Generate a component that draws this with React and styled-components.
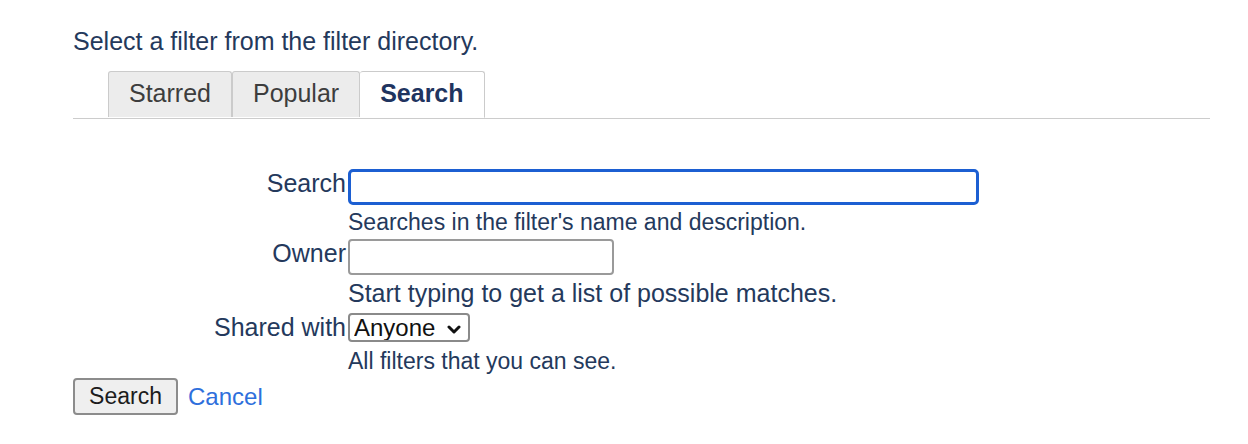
import React from "react";
import styled, { createGlobalStyle } from "styled-components";

const GlobalStyle = createGlobalStyle`
  body {
    margin: 0;
    background: #fff;
    font-family: "Liberation Sans", Arial, Helvetica, sans-serif;
  }
`;

const tabs = [
  { id: "starred", label: "Starred" },
  { id: "popular", label: "Popular" },
  { id: "search", label: "Search" },
];

const App = () => {
  const active = "search";
  return (
    <>
      <GlobalStyle />
      <Page>
        <Intro>Select a filter from the filter directory.</Intro>
        <TabBar>
          {tabs.map((tab) => (
            <Tab key={tab.id} $active={tab.id === active}>
              {tab.label}
            </Tab>
          ))}
        </TabBar>
        <Form>
          <Label htmlFor="filter-search">Search</Label>
          <TextInput id="filter-search" $focused $width={631} $height={36} />
          <Hint $spacing="4px 0 4px">
            Searches in the filter's name and description.
          </Hint>

          <Label htmlFor="filter-owner">Owner</Label>
          <TextInput id="filter-owner" $width={266} $height={36} />
          <Hint $large $spacing="4px 0 5px">
            Start typing to get a list of possible matches.
          </Hint>

          <Label htmlFor="filter-shared">Shared with</Label>
          <SelectBox>
            <Select id="filter-shared" defaultValue="anyone">
              <option value="anyone">Anyone</option>
            </Select>
            <Chevron viewBox="0 0 14 9" aria-hidden="true">
              <path
                d="M2 2 L7 7 L12 2"
                fill="none"
                stroke="#111"
                strokeWidth="3"
                strokeLinecap="round"
                strokeLinejoin="round"
              />
            </Chevron>
          </SelectBox>
          <Hint $spacing="6px 0 4px">All filters that you can see.</Hint>
        </Form>
        <Actions>
          <Button type="button">Search</Button>
          <CancelLink href="#">Cancel</CancelLink>
        </Actions>
      </Page>
    </>
  );
};

const Page = styled.div`
  width: 1137px;
  padding: 27px 0 0 73px;
  color: #24395c;
`;

const Intro = styled.div`
  font-size: 25px;
  line-height: 29px;
`;

const TabBar = styled.div`
  display: flex;
  margin-top: 15px;
  padding-left: 35px;
  border-bottom: 1px solid #cccccc;
  height: 47px;
`;

const Tab = styled.div`
  display: flex;
  align-items: center;
  padding: 0 20px 3px;
  font-size: 25px;
  border: 1px solid #cbcbcb;
  border-bottom: ${(p) => (p.$active ? "1px solid #fff" : "none")};
  border-left: ${(p) => (p.$active ? "none" : "1px solid #cbcbcb")};
  border-radius: 3px 3px 0 0;
  background: ${(p) => (p.$active ? "#fff" : "#ececec")};
  color: ${(p) => (p.$active ? "#1f3460" : "#3d3d3d")};
  font-weight: ${(p) => (p.$active ? "bold" : "normal")};
  height: ${(p) => (p.$active ? "47px" : "46px")};
  box-sizing: border-box;
  &:first-child {
    border-left: 1px solid #cbcbcb;
  }
`;

const Form = styled.div`
  display: grid;
  grid-template-columns: 275px 1fr;
  align-items: start;
  margin-top: 50px;
`;

const Label = styled.label`
  grid-column: 1;
  justify-self: end;
  padding-right: 2px;
  font-size: 25px;
  line-height: 29px;
`;

const TextInput = styled.input`
  grid-column: 2;
  box-sizing: border-box;
  width: ${(p) => p.$width}px;
  height: ${(p) => p.$height}px;
  border: ${(p) => (p.$focused ? "3px solid #1c5fd2" : "2px solid #9a9a9a")};
  border-radius: ${(p) => (p.$focused ? "5px" : "4px")};
  background: #fff;
  outline: none;
  font: inherit;
`;

const Hint = styled.div`
  grid-column: 2;
  font-size: ${(p) => (p.$large ? "25px" : "23px")};
  line-height: ${(p) => (p.$large ? "29px" : "26px")};
  margin: ${(p) => p.$spacing};
`;

const SelectBox = styled.div`
  grid-column: 2;
  position: relative;
  display: inline-flex;
  align-items: center;
  justify-self: start;
  box-sizing: border-box;
  width: 122px;
  height: 29px;
  border: 2px solid #8a8a8a;
  border-radius: 4px;
  background: #fff;
`;

const Select = styled.select`
  appearance: none;
  border: none;
  background: transparent;
  outline: none;
  padding: 0 0 0 4px;
  width: 100%;
  height: 100%;
  font-family: "Liberation Sans", Arial, sans-serif;
  font-size: 24px;
  line-height: 25px;
  color: #111;
`;

const Chevron = styled.svg`
  position: absolute;
  right: 7px;
  top: 10px;
  width: 14px;
  height: 9px;
  pointer-events: none;
`;

const Actions = styled.div`
  display: flex;
  align-items: center;
  gap: 10px;
`;

const Button = styled.button`
  box-sizing: border-box;
  width: 105px;
  height: 37px;
  border: 2px solid #8c8c8c;
  border-radius: 4px;
  background: #efefef;
  color: #1c1c1c;
  font-family: "Liberation Sans", Arial, sans-serif;
  font-size: 23px;
  padding: 0;
`;

const CancelLink = styled.a`
  color: #2e6fdc;
  font-size: 24px;
  text-decoration: none;
`;

export default App;
